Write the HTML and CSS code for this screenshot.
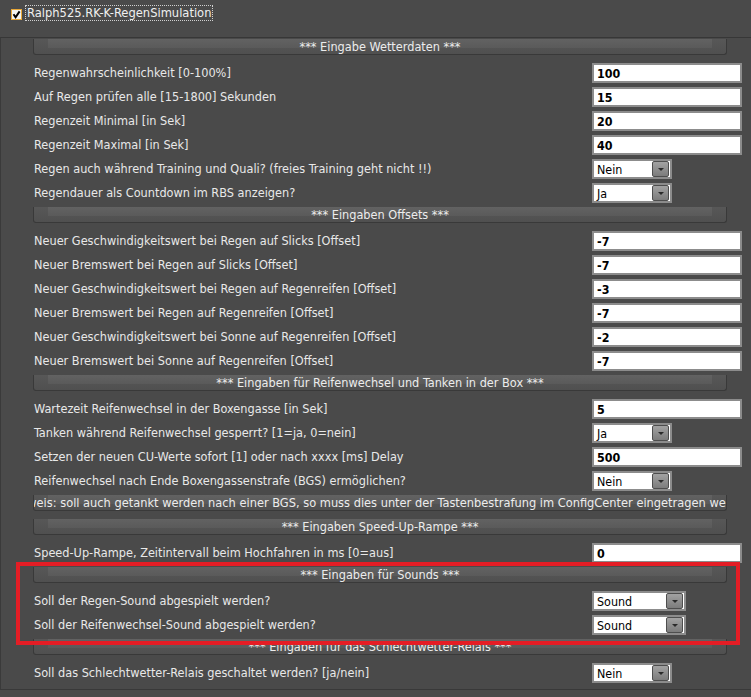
FILE: index.html
```html
<!DOCTYPE html>
<html lang="de">
<head>
<meta charset="utf-8">
<title>Ralph525.RK-K-RegenSimulation</title>
<link rel="stylesheet" href="styles.css">
</head>
<body>
<div class="plugin-head">
  <span class="check">
    <svg width="11" height="11" viewBox="0 0 11 11"><rect x="0.5" y="0.5" width="10" height="10" fill="#f4f4f0" stroke="#e8a838"/><path d="M2.5 5.2 L4.6 8.2 L8.6 2.4" fill="none" stroke="#000" stroke-width="2"/></svg>
  </span>
  <span class="plugin-name">Ralph525.RK-K-RegenSimulation</span>
</div>

<div class="panel">
  <div class="bar"><span>*** Eingabe Wetterdaten ***</span></div>
  <div class="row"><span class="label">Regenwahrscheinlichkeit [0-100%]</span><div class="field">100</div></div>
  <div class="row"><span class="label">Auf Regen prüfen alle [15-1800] Sekunden</span><div class="field">15</div></div>
  <div class="row"><span class="label">Regenzeit Minimal [in Sek]</span><div class="field">20</div></div>
  <div class="row"><span class="label">Regenzeit Maximal [in Sek]</span><div class="field">40</div></div>
  <div class="row"><span class="label">Regen auch während Training und Quali? (freies Training geht nicht !!)</span><div class="select"><span>Nein</span><i class="drop"></i></div></div>
  <div class="row"><span class="label">Regendauer als Countdown im RBS anzeigen?</span><div class="select"><span>Ja</span><i class="drop"></i></div></div>

  <div class="bar"><span>*** Eingaben Offsets ***</span></div>
  <div class="row"><span class="label">Neuer Geschwindigkeitswert bei Regen auf Slicks [Offset]</span><div class="field">-7</div></div>
  <div class="row"><span class="label">Neuer Bremswert bei Regen auf Slicks [Offset]</span><div class="field">-7</div></div>
  <div class="row"><span class="label">Neuer Geschwindigkeitswert bei Regen auf Regenreifen [Offset]</span><div class="field">-3</div></div>
  <div class="row"><span class="label">Neuer Bremswert bei Regen auf Regenreifen [Offset]</span><div class="field">-7</div></div>
  <div class="row"><span class="label">Neuer Geschwindigkeitswert bei Sonne auf Regenreifen [Offset]</span><div class="field">-2</div></div>
  <div class="row"><span class="label">Neuer Bremswert bei Sonne auf Regenreifen [Offset]</span><div class="field">-7</div></div>

  <div class="bar"><span>*** Eingaben für Reifenwechsel und Tanken in der Box ***</span></div>
  <div class="row"><span class="label">Wartezeit Reifenwechsel in der Boxengasse [in Sek]</span><div class="field">5</div></div>
  <div class="row"><span class="label">Tanken während Reifenwechsel gesperrt? [1=ja, 0=nein]</span><div class="select"><span>Ja</span><i class="drop"></i></div></div>
  <div class="row"><span class="label">Setzen der neuen CU-Werte sofort [1] oder nach xxxx [ms] Delay</span><div class="field">500</div></div>
  <div class="row"><span class="label">Reifenwechsel nach Ende Boxengassenstrafe (BGS) ermöglichen?</span><div class="select"><span>Nein</span><i class="drop"></i></div></div>
  <div class="bar bar-note"><span>Hinweis: soll auch getankt werden nach einer BGS, so muss dies unter der Tastenbestrafung im ConfigCenter eingetragen werden</span></div>

  <div class="bar"><span>*** Eingaben Speed-Up-Rampe ***</span></div>
  <div class="row"><span class="label">Speed-Up-Rampe, Zeitintervall beim Hochfahren in ms [0=aus]</span><div class="field">0</div></div>

  <div class="bar"><span>*** Eingaben für Sounds ***</span></div>
  <div class="row"><span class="label">Soll der Regen-Sound abgespielt werden?</span><div class="select select-wide"><span>Sound</span><i class="drop"></i></div></div>
  <div class="row"><span class="label">Soll der Reifenwechsel-Sound abgespielt werden?</span><div class="select select-wide"><span>Sound</span><i class="drop"></i></div></div>

  <div class="bar"><span>*** Eingaben für das Schlechtwetter-Relais ***</span></div>
  <div class="row"><span class="label">Soll das Schlechtwetter-Relais geschaltet werden? [ja/nein]</span><div class="select"><span>Nein</span><i class="drop"></i></div></div>

  <div class="highlight"></div>
</div>
</body>
</html>
```

FILE: styles.css
```css
html, body {
  margin: 0;
  padding: 0;
  background: #4a4a4a;
}

body {
  width: 751px;
  height: 697px;
  overflow: hidden;
  font-family: "DejaVu Sans Condensed", "DejaVu Sans", sans-serif;
  font-size: 12.6px;
  color: #e6e6e6;
}

/* plugin title line with its checkbox */
.plugin-head {
  height: 37px;
  display: flex;
  align-items: flex-start;
  padding: 9px 0 0 11px;
  box-sizing: border-box;
  gap: 3px;
}

.check {
  display: flex;
  width: 11px;
  height: 11px;
}

.plugin-name {
  font-size: 12.8px;
  line-height: 14px;
  padding: 0 1px;
  margin-top: -4px;
  border: 1px dotted #d0d0d0;
  color: #f0f0f0;
}

/* settings panel */
.panel {
  position: relative;
  border-top: 1px solid #373737;
  border-left: 1px solid #3a3a3a;
  border-bottom: 1px solid #393939;
  padding: 1px 0 6px 32px;
  display: flex;
  flex-direction: column;
  gap: 4px;
}

.bar {
  position: relative;
  width: 692px;
  height: 15px;
  margin-bottom: 4px;
  border: 1px solid #393939;
  border-top: none;
  border-radius: 0 0 3px 3px;
  background: linear-gradient(#575757, #505050);
  display: flex;
  justify-content: center;
  align-items: center;
  overflow: hidden;
  white-space: nowrap;
  font-size: 12.6px;
  color: #ececec;
}

.bar::before {
  content: "";
  position: absolute;
  top: 0;
  left: 14px;
  right: 14px;
  height: 9px;
  background: linear-gradient(#626262, #5a5a5a);
}

.bar span {
  position: relative;
  flex: none;
}

.bar-note {
  font-size: 12.7px;
}

.row {
  display: grid;
  grid-template-columns: 558px auto;
  align-items: center;
  height: 20px;
  padding-left: 1px;
}

.label {
  font-size: 12.6px;
  white-space: nowrap;
  color: #e8e8e8;
  margin-top: -2px;
}

.field {
  width: 143px;
  height: 16px;
  border: 2px solid #8c8c8c;
  background: #fff;
  color: #000;
  font-weight: bold;
  font-size: 12.4px;
  line-height: 17px;
  padding-left: 3px;
}

.select {
  position: relative;
  width: 73px;
  height: 16px;
  padding-left: 3px;
  border: 2px solid #8c8c8c;
  background: #fff;
  color: #000;
  font-size: 12.4px;
  line-height: 17px;
}

.select-wide {
  width: 87px;
}

.drop {
  position: absolute;
  top: 0;
  right: 1px;
  width: 15px;
  height: 14px;
  border: 1px solid #4e4e4e;
  border-radius: 2px;
  background: linear-gradient(#a2a2a2, #7c7c7c);
}

.drop::after {
  content: "";
  position: absolute;
  left: 5px;
  top: 6px;
  border-left: 3px solid transparent;
  border-right: 3px solid transparent;
  border-top: 3px solid #2a2a2a;
}

/* red marker around the sound section */
.highlight {
  position: absolute;
  left: 15px;
  top: 524px;
  width: 716px;
  height: 75px;
  border: 4px solid #e41d25;
  pointer-events: none;
}
```
